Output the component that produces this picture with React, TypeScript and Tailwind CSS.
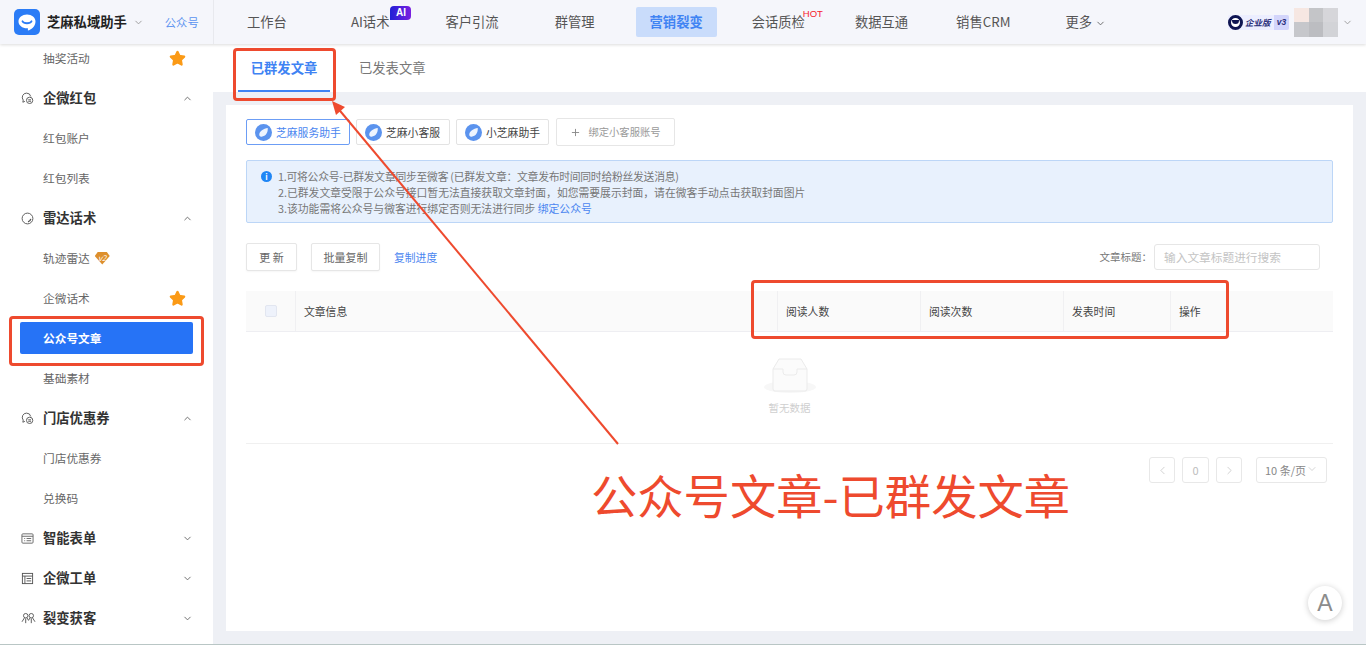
import React from 'react'
import { ChevronDown, ChevronUp, ChevronLeft, ChevronRight, Plus, Star } from 'lucide-react'

const NAV_ITEMS = [
  { label: '工作台', className: 'ml-[33px]' },
  { label: 'AI话术', className: 'ml-[64px]', badge: 'AI' },
  { label: '客户引流', className: 'ml-[56px]' },
  { label: '群管理', className: 'ml-[56px]' },
  { label: '营销裂变', className: 'ml-[55px]', active: true },
  { label: '会话质检', className: 'ml-[49px]', hot: true },
  { label: '数据互通', className: 'ml-[50px]' },
  { label: '销售CRM', className: 'ml-[48px]' },
]

function GroupIcon({ type }: { type: string }) {
  if (type === 'chat') {
    return (
      <svg viewBox="0 0 14 14" className="h-[13px] w-[13px]" fill="none" stroke="#555" strokeWidth="1">
        <path d="M6 1.2a4.6 4.6 0 0 0-3.6 7.5L2 11l2.2-.9" />
        <path d="M6 1.2a4.6 4.6 0 0 1 4.5 3.6" />
        <circle cx="9.3" cy="9" r="3.4" />
        <path d="M7.8 8.4h3M7.8 10h3" />
      </svg>
    )
  }
  if (type === 'radar') {
    return (
      <svg viewBox="0 0 14 14" className="h-[13px] w-[13px]" fill="none" stroke="#555" strokeWidth="1">
        <circle cx="7" cy="7" r="5.8" />
        <path d="M7.500 10.600A3.800 3.800 0 0 0 10.600 7.500" strokeWidth="1.400" />
      </svg>
    )
  }
  if (type === 'form') {
    return (
      <svg viewBox="0 0 14 14" className="h-[13px] w-[13px]" fill="none" stroke="#666" strokeWidth="1">
        <rect x="1" y="2" width="12" height="10" rx="1" />
        <path d="M1 4.6h12M3.5 7h1M6 7h5M3.5 9.4h1M6 9.4h5" />
      </svg>
    )
  }
  if (type === 'order') {
    return (
      <svg viewBox="0 0 14 14" className="h-[13px] w-[13px]" fill="none" stroke="#555" strokeWidth="1">
        <rect x="1.5" y="1.5" width="11" height="11" />
        <path d="M1.5 4.4h11M4.2 4.4v8M6 7h5M6 9.6h5" />
      </svg>
    )
  }
  return (
    <svg viewBox="0 0 16 14" className="h-[13px] w-[15px]" fill="none" stroke="#555" strokeWidth="1">
      <circle cx="5" cy="4" r="2.4" />
      <circle cx="11" cy="4" r="2.4" />
      <path d="M1 10.5 3.6 6.4M6.4 6.4 8 9l1.6-2.6M12.4 6.4 15 10.5M5 7v5M11 7v5" />
    </svg>
  )
}

function SideGroup({ icon, label, open }: { icon: string; label: string; open?: boolean }) {
  return (
    <div className="flex h-10 items-center pl-[21px] pr-[20px]">
      <span className="flex w-[22px] items-center">
        <GroupIcon type={icon} />
      </span>
      <span className="flex-1 text-[13.3px] font-semibold text-[#333]">{label}</span>
      {open ? (
        <ChevronUp className="h-[11px] w-[11px] text-[#666]" strokeWidth={2} />
      ) : (
        <ChevronDown className="h-[11px] w-[11px] text-[#666]" strokeWidth={2} />
      )}
    </div>
  )
}

function SideItem({ label, star, v2 }: { label: string; star?: boolean; v2?: boolean }) {
  return (
    <div className="flex h-10 items-center pl-[43px] pr-[27px] text-[11.7px] text-[#666]">
      <span>{label}</span>
      {v2 && (
        <span className="ml-[5px] flex h-[13px] w-[15px] items-center justify-center bg-[#dd8f2c] text-[8px] italic leading-none text-white [clip-path:polygon(22%_0,78%_0,100%_35%,50%_100%,0_35%)]">
          v2
        </span>
      )}
      {star && <Star className="ml-auto h-[17px] w-[17px] fill-[#fb9a16] text-[#fb9a16]" />}
    </div>
  )
}

function AccountButton({ label, active, className }: { label: string; active?: boolean; className: string }) {
  return (
    <div
      className={`flex h-[26px] items-center gap-[4px] rounded-[2px] border bg-white pl-[8px] text-[10.8px] ${
        active ? 'border-[#6c9df5] text-[#4b86f0]' : 'border-[#e3e3e3] text-[#444]'
      } ${className}`}
    >
      <svg viewBox="0 0 18 18" className="h-[17px] w-[17px]">
        <circle cx="9" cy="9" r="9" fill="#5b93ee" />
        <path d="M13.5 4.2c.3 4.8-1.8 8.6-6.6 9.2-1.4.2-2.4-.7-2.4-2 0-3.800 4.700-6.700 9-7.200Z" fill="#eef4fe" />
      </svg>
      {label}
    </div>
  )
}

function OutlineButton({ children, className }: { children: React.ReactNode; className: string }) {
  return (
    <div
      className={`flex h-[28px] items-center justify-center rounded-[2px] border border-[#e6e6e6] bg-white text-[11px] text-[#666] shadow-[0_1px_2px_rgba(0,0,0,0.04)] ${className}`}
    >
      {children}
    </div>
  )
}

function PageBox({ children, className }: { children: React.ReactNode; className: string }) {
  return (
    <div className={`flex h-[26px] items-center justify-center rounded-[3px] border border-[#e8e8e8] text-[11px] ${className}`}>
      {children}
    </div>
  )
}

function RedBox({ className }: { className: string }) {
  return <div className={`pointer-events-none absolute rounded-[4px] border-[3px] border-[#ee4a2e] ${className}`} />
}

export default function App() {
  return (
    <div className="relative flex h-[645px] w-[1366px] flex-col overflow-hidden bg-white font-['Noto_Sans_CJK_SC','Noto_Sans',sans-serif]">
      <header className="relative z-10 flex h-[44px] shrink-0 items-center bg-[#f5f6fb] shadow-[0_1px_3px_rgba(0,0,0,0.14)]">
        <div className="flex h-full w-[214px] shrink-0 items-center border-r border-[#e8e9ee] pl-[14px]">
          <svg viewBox="0 0 26 26" className="h-[26px] w-[26px]">
            <rect width="26" height="26" rx="5" fill="#2b7cf6" />
            <path d="M13 5.500c-4.800 0-8.500 3-8.500 6.900 0 3.800 3.700 6.800 8.500 6.800l.9.000v2.300c3-1 7.600-3.800 7.600-9.100 0-3.900-3.700-6.900-8.500-6.900Z" fill="#fff" />
            <path d="M8.500 12.300c1.300 2.600 7.700 2.600 9 0" fill="none" stroke="#2b7cf6" strokeWidth="1.800" strokeLinecap="round" />
          </svg>
          <span className="ml-[7px] text-[13.3px] font-bold text-[#222]">芝麻私域助手</span>
          <ChevronDown className="ml-[6px] h-[11px] w-[11px] text-[#999]" />
          <span className="ml-[21px] text-[11.3px] text-[#5b93f0]">公众号</span>
        </div>
        {NAV_ITEMS.map((item) => (
          <div key={item.label} className={`relative flex items-center text-[13.3px] ${item.className}`}>
            {item.active && <div className="absolute -inset-x-[14px] -inset-y-[5px] rounded-[2px] bg-[#c9dcfb]" />}
            <span className={item.active ? 'relative font-semibold text-[#3f83f3]' : 'relative text-[#555]'}>{item.label}</span>
            {item.badge && (
              <span className="absolute -right-[22px] -top-[6px] flex h-[14px] w-[21px] items-center justify-center rounded-[4px] rounded-bl-none bg-[linear-gradient(90deg,#1f1fd6,#7a1fe0)] font-['Liberation_Sans',sans-serif] text-[10px] font-bold leading-none text-white">
                {item.badge}
              </span>
            )}
            {item.hot && (
              <span className="absolute -right-[18px] -top-[3px] font-['Liberation_Sans',sans-serif] text-[9.5px] leading-none text-[#f5222d]">
                HOT
              </span>
            )}
          </div>
        ))}
        <div className="ml-[55px] flex items-center text-[13.3px] text-[#555]">
          更多
          <ChevronDown className="ml-[3px] mt-[2px] h-[11px] w-[11px] text-[#666]" />
        </div>
        <div className="ml-auto flex items-center pr-[13px]">
          <div className="flex h-[15px] w-[61px] items-center rounded-[2px] bg-[#eceeff]">
            <span className="flex h-[15px] w-[15px] shrink-0 items-center justify-center rounded-full border-[3px] border-[#0f1552] bg-white">
              <span className="h-[4px] w-[7px] rounded-b-full bg-[#0f1552]" />
            </span>
            <span className="ml-[2px] text-[8.5px] font-semibold italic leading-none text-[#2a2f7a]">企业版</span>
            <span className="ml-auto flex h-[15px] w-[15px] items-center justify-center rounded-r-[2px] bg-[#d3d5fb] font-['Liberation_Sans',sans-serif] text-[8.5px] font-bold italic leading-none text-[#2a2f7a]">
              v3
            </span>
          </div>
          <div className="ml-[5px] grid h-[29px] w-[44px] grid-cols-3 grid-rows-2">
            <div className="bg-[#f6e7e2]" />
            <div className="bg-[#c4c5c8]" />
            <div className="bg-[#d6d6da]" />
            <div className="bg-[#c6c7cb]" />
            <div className="bg-[#bcbdc1]" />
            <div className="bg-[#d2d3d7]" />
          </div>
          <ChevronDown className="ml-[4px] h-[11px] w-[11px] text-[#999]" />
        </div>
      </header>

      <div className="flex min-h-0 flex-1 border-b border-[#b9c6c5]">
        <aside className="w-[213px] shrink-0 overflow-hidden bg-white">
          <div className="-mt-[6px]">
            <SideItem label="抽奖活动" star />
            <SideGroup icon="chat" label="企微红包" open />
            <SideItem label="红包账户" />
            <SideItem label="红包列表" />
            <SideGroup icon="radar" label="雷达话术" open />
            <SideItem label="轨迹雷达" v2 />
            <SideItem label="企微话术" star />
            <div className="flex h-10 items-center px-[20px]">
              <div className="flex h-[32px] w-[174px] items-center rounded-[2px] bg-[#2673f6] pl-[23px] text-[11.7px] font-semibold text-white">
                公众号文章
              </div>
            </div>
            <SideItem label="基础素材" />
            <SideGroup icon="chat" label="门店优惠券" open />
            <SideItem label="门店优惠券" />
            <SideItem label="兑换码" />
            <SideGroup icon="form" label="智能表单" />
            <SideGroup icon="order" label="企微工单" />
            <SideGroup icon="group" label="裂变获客" />
          </div>
        </aside>

        <main className="flex min-w-0 flex-1 flex-col bg-[#eef0f5]">
          <div className="flex h-[48px] shrink-0 items-stretch bg-white pl-[25px]">
            <div className="flex w-[92px] items-center justify-center border-b-2 border-[#3f83f3] pt-[2px] text-[13.3px] font-semibold text-[#3f83f3]">
              已群发文章
            </div>
            <div className="ml-[29px] flex items-center text-[13.3px] text-[#777]">已发表文章</div>
          </div>

          <section className="mx-[13px] mb-[13px] mt-[13px] flex flex-1 flex-col bg-white px-[20px] pt-[13px]">
            <div className="flex items-center">
              <AccountButton label="芝麻服务助手" active className="w-[104px]" />
              <AccountButton label="芝麻小客服" className="ml-[6px] w-[94px]" />
              <AccountButton label="小芝麻助手" className="ml-[6px] w-[93px]" />
              <div className="ml-[7px] flex h-[28px] w-[119px] items-center justify-center rounded-[2px] border border-[#e6e6e6] text-[10.3px] text-[#999]">
                <Plus className="mr-[7px] h-[11px] w-[11px] text-[#888]" />
                绑定小客服账号
              </div>
            </div>

            <div className="mt-[14px] flex h-[63px] rounded-[2px] border border-[#bcd6f7] bg-[#e8f1fd] pl-[14px] pt-[7px]">
              <span className="mt-[3px] flex h-[11px] w-[11px] shrink-0 items-center justify-center rounded-full bg-[#1f86f5] text-[8px] font-bold leading-none text-white">
                i
              </span>
              <div className="ml-[6px] text-[10.8px] leading-[16px] text-[#777]">
                <p className="tracking-[-0.25px]">1.可将公众号-已群发文章同步至微客 (已群发文章：文章发布时间同时给粉丝发送消息)</p>
                <p>2.已群发文章受限于公众号接口暂无法直接获取文章封面，如您需要展示封面，请在微客手动点击获取封面图片</p>
                <p>
                  3.该功能需将公众号与微客进行绑定否则无法进行同步 <span className="text-[#4b86f0]">绑定公众号</span>
                </p>
              </div>
            </div>

            <div className="mt-[20px] flex items-center">
              <OutlineButton className="w-[51px]">更 新</OutlineButton>
              <OutlineButton className="ml-[14px] w-[69px]">批量复制</OutlineButton>
              <span className="ml-[14px] text-[10.8px] text-[#4b86f0]">复制进度</span>
              <span className="ml-auto text-[10.5px] text-[#777]">文章标题：</span>
              <div className="ml-[2px] mr-[13px] flex h-[26px] w-[166px] items-center rounded-[3px] border border-[#e6e6e6] pl-[9px] text-[11.7px] text-[#c4c4c4]">
                输入文章标题进行搜索
              </div>
            </div>

            <div className="mt-[20px] grid h-[41px] grid-cols-[50px_482px_143px_143px_107px_1fr] border-b border-[#eeeef2] bg-[#fafafa] text-[10.8px] text-[#444]">
              <div className="flex items-center justify-center border-r border-[#f0f0f2]">
                <span className="h-[12px] w-[12px] rounded-[2px] border border-[#e2e6f0] bg-[#eef2fb]" />
              </div>
              <div className="flex items-center border-r border-[#f0f0f2] pl-[8px]">文章信息</div>
              <div className="flex items-center border-r border-[#f0f0f2] pl-[8px]">阅读人数</div>
              <div className="flex items-center border-r border-[#f0f0f2] pl-[8px]">阅读次数</div>
              <div className="flex items-center border-r border-[#f0f0f2] pl-[8px]">发表时间</div>
              <div className="flex items-center pl-[8px]">操作</div>
            </div>

            <div className="flex h-[112px] flex-col items-center border-b border-[#f0f0f0] pt-[26px]">
              <svg viewBox="0 0 52 36" className="h-[36px] w-[52px]">
                <ellipse cx="26" cy="29" rx="26" ry="6" fill="#f7f7f7" />
                <path d="M9 11 15 1h22l6 10v20a2 2 0 0 1-2 2H11a2 2 0 0 1-2-2Z" fill="#fbfbfb" stroke="#ebebeb" />
                <path d="M9 11h10v3a3 3 0 0 0 3 3h8a3 3 0 0 0 3-3v-3h10" fill="none" stroke="#ebebeb" />
              </svg>
              <span className="mt-[6px] text-[10.5px] text-[#cfcfcf]">暂无数据</span>
            </div>

            <div className="mt-[13px] flex items-center pr-[6px]">
              <PageBox className="ml-auto w-[26px] text-[#bdbdbd]">
                <ChevronLeft className="h-[13px] w-[13px]" strokeWidth={1.25} />
              </PageBox>
              <PageBox className="ml-[7px] w-[27px] text-[#bdbdbd]">0</PageBox>
              <PageBox className="ml-[7px] w-[26px] text-[#bdbdbd]">
                <ChevronRight className="h-[13px] w-[13px]" strokeWidth={1.25} />
              </PageBox>
              <PageBox className="ml-[14px] w-[71px] text-[#888]">
                10 条/页
                <ChevronDown className="-mt-[3px] h-[12px] w-[12px] text-[#bbb]" strokeWidth={1.25} />
              </PageBox>
            </div>
          </section>
        </main>
      </div>

      <div className="absolute left-[1308px] top-[586px] z-20 flex h-[34px] w-[34px] items-center justify-center rounded-full bg-white font-['Liberation_Sans',sans-serif] text-[23px] text-[#8c8c8c] shadow-[0_1px_6px_rgba(0,0,0,0.2)]">
        A
      </div>

      <RedBox className="left-[233px] top-[48px] z-20 h-[53px] w-[103px]" />
      <RedBox className="left-[751px] top-[280px] z-20 h-[59px] w-[478px]" />
      <RedBox className="left-[9px] top-[316px] z-20 h-[50px] w-[195px]" />

      <svg className="pointer-events-none absolute left-0 top-0 z-20 h-[645px] w-[1366px]" viewBox="0 0 1366 645" fill="none">
        <path d="M618 444 336 106" stroke="#ee4a2e" strokeWidth="2" />
        <path d="M332 101 345 107 336 115Z" fill="#ee4a2e" />
      </svg>

      <div className="absolute left-[591px] top-[461px] z-20 whitespace-nowrap text-[46.3px] font-normal leading-[66px] text-[#ee4a2e]">
        公众号文章-已群发文章
      </div>
    </div>
  )
}
